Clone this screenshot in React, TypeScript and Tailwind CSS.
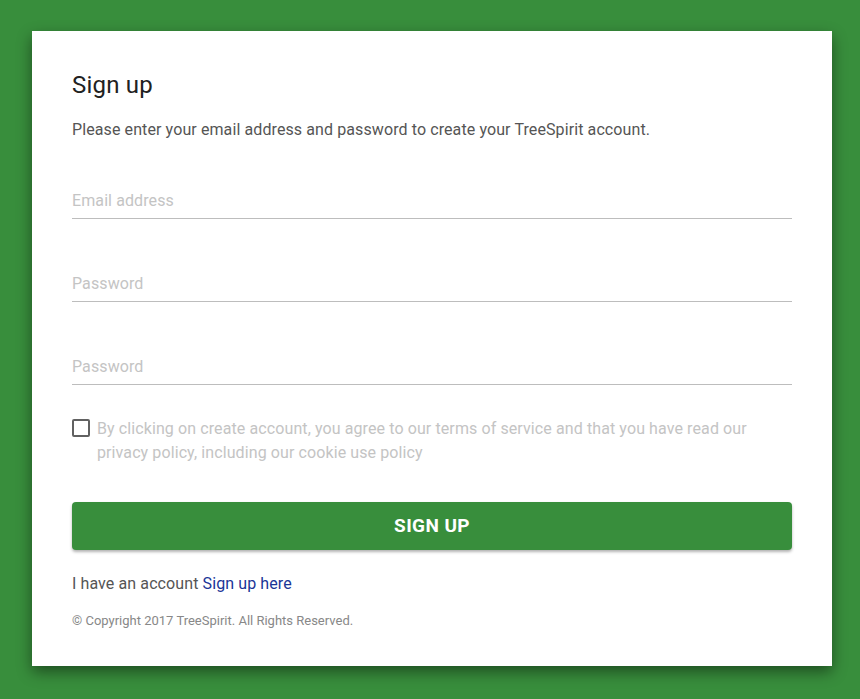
export default function App() {
  return (
    <div className="min-h-[699px] bg-[#388e3c] pt-[31px] pl-8 font-['Roboto',sans-serif]">
      <div className="w-[800px] bg-white px-10 pt-[38px] pb-[37px] shadow-[0_6px_14px_rgba(0,0,0,0.45)]">
        <h1 className="text-[24px] leading-8 tracking-[0.2px] text-[#212121]">Sign up</h1>
        <p className="mt-[17px] text-[16px] leading-6 tracking-[0.1px] text-[#555]">
          Please enter your email address and password to create your TreeSpirit account.
        </p>

        <form className="mt-[47px]" onSubmit={(e) => e.preventDefault()}>
          {["Email address", "Password", "Password"].map((ph, i) => (
            <input
              key={i}
              type={i === 0 ? "email" : "password"}
              placeholder={ph}
              className={`block w-full border-b border-[#bdbdbd] bg-transparent pb-[5px] text-[16px] leading-6 tracking-[0.1px] text-[#333] placeholder:text-[#c4c4c4] outline-none ${
                i === 0 ? "" : "mt-[53px]"
              }`}
            />
          ))}

          <label className="mt-[32px] flex items-start gap-[7px]">
            <span className="mt-[2px] h-[18px] w-[18px] flex-shrink-0 rounded-[2px] border-2 border-[#616161]" />
            <span className="text-[16px] leading-6 tracking-[0.1px] text-[#c4c4c4]">
              By clicking on create account, you agree to our terms of service and that you have read our privacy policy, including our cookie use policy
            </span>
          </label>

          <button
            type="submit"
            className="mt-[37px] block h-12 w-full rounded-[4px] bg-[#388e3c] text-[19px] font-bold tracking-[0.4px] text-white shadow-[0_2px_3px_rgba(0,0,0,0.3)]"
          >
            SIGN UP
          </button>
        </form>

        <p className="mt-[22px] text-[16px] leading-6 tracking-[0.1px] text-[#555]">
          I have an account <a href="#" className="text-[#1a3597]">Sign up here</a>
        </p>
        <p className="mt-[17px] text-[13px] leading-4 text-[#888]">
          © Copyright 2017 TreeSpirit. All Rights Reserved.
        </p>
      </div>
    </div>
  );
}
